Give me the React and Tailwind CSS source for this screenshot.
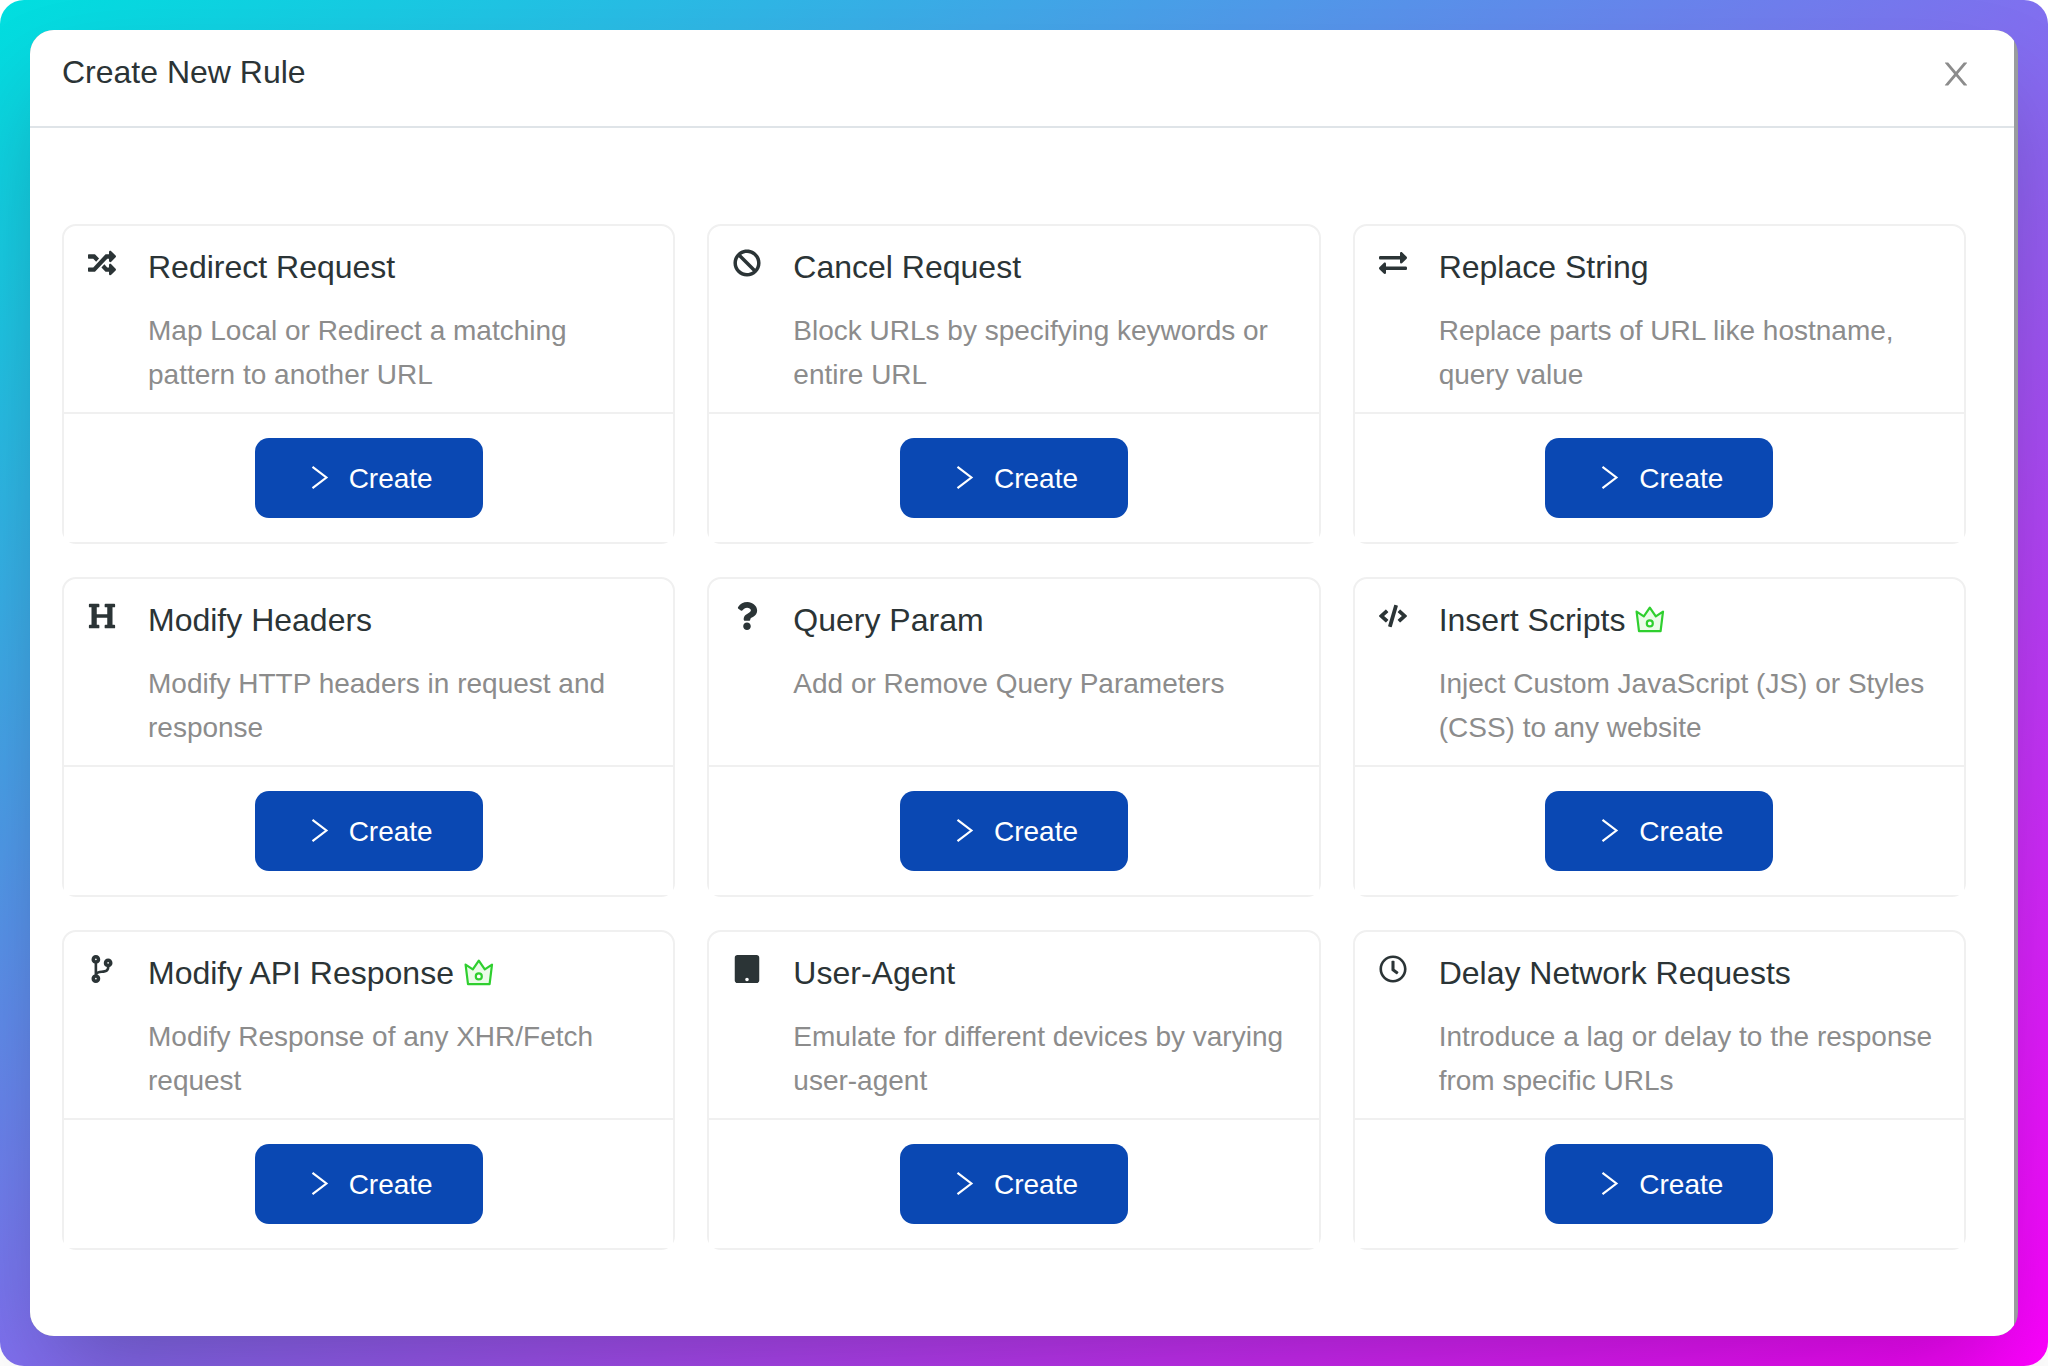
import {
  FaBan,
  FaCode,
  FaCodeBranch,
  FaExchangeAlt,
  FaHeading,
  FaQuestion,
  FaRandom,
  FaRegClock,
  FaTablet,
} from "react-icons/fa";

const rules = [
  { icon: FaRandom, title: "Redirect Request", text: "Map Local or Redirect a matching pattern to another URL" },
  { icon: FaBan, title: "Cancel Request", text: "Block URLs by specifying keywords or entire URL" },
  { icon: FaExchangeAlt, title: "Replace String", text: "Replace parts of URL like hostname, query value" },
  { icon: FaHeading, title: "Modify Headers", text: "Modify HTTP headers in request and response" },
  { icon: FaQuestion, title: "Query Param", text: "Add or Remove Query Parameters" },
  { icon: FaCode, title: "Insert Scripts", text: "Inject Custom JavaScript (JS) or Styles (CSS) to any website", premium: true },
  { icon: FaCodeBranch, title: "Modify API Response", text: "Modify Response of any XHR/Fetch request", premium: true },
  { icon: FaTablet, title: "User-Agent", text: "Emulate for different devices by varying user-agent" },
  { icon: FaRegClock, title: "Delay Network Requests", text: "Introduce a lag or delay to the response from specific URLs" },
];

function CloseIcon() {
  return (
    <svg viewBox="0 0 1024 1024" className="size-9" fill="currentColor" aria-hidden="true">
      <path d="M563.8 512l262.5-312.9c4.4-5.2.7-13.1-6.1-13.1h-79.8c-4.7 0-9.2 2.1-12.3 5.7L511.6 449.8 295.1 191.7c-3-3.6-7.5-5.7-12.3-5.7H203c-6.8 0-10.5 7.9-6.1 13.1L459.4 512 196.9 824.9A7.95 7.95 0 0 0 203 838h79.8c4.7 0 9.2-2.1 12.3-5.7l216.5-258.1 216.5 258.1c3 3.6 7.5 5.7 12.3 5.7h79.8c6.8 0 10.5-7.9 6.1-13.1L563.8 512z" />
    </svg>
  );
}

function ChevronIcon() {
  return (
    <svg viewBox="0 0 28 28" className="size-7" fill="none" aria-hidden="true">
      <path d="M7.5 1.8L21.4 12.5L7.5 23.2" stroke="currentColor" strokeWidth="2.2" />
    </svg>
  );
}

function CrownIcon() {
  return (
    <svg viewBox="0 0 32 32" className="size-8" fill="none" aria-hidden="true">
      <path
        d="M3.6 7.6L10.8 12.4L16.8 3.6L22.8 12.4L30 7.6L27.6 27.2H6Z"
        fill="#ebfbe9"
        stroke="#2fcf2f"
        strokeWidth="2.2"
        strokeLinejoin="round"
      />
      <circle cx="16.8" cy="19.4" r="3" fill="#fff" stroke="#2fcf2f" strokeWidth="2.2" />
    </svg>
  );
}

function RuleCard({ rule }) {
  const Icon = rule.icon;
  return (
    <li className="flex flex-col rounded-[14px] border-2 border-[#f0f0f0] bg-white">
      <div className="flex flex-1 gap-8 px-6 pt-4 pb-[15px]">
        <Icon className="mt-[7px] size-7 shrink-0" aria-hidden="true" />
        <div className="min-w-0 flex-1">
          <h2 className="mb-[17px] flex items-center gap-2 text-[32px] leading-[50px]">
            {rule.title}
            {rule.premium && <CrownIcon />}
          </h2>
          <p className="min-h-22 text-[28px] leading-[44px] text-[#8c8c8c]">{rule.text}</p>
        </div>
      </div>
      <div className="flex justify-center border-t-2 border-[#f0f0f0] bg-white py-6">
        <button
          type="button"
          className="flex h-20 items-center gap-4 rounded-[14px] bg-[#0a48b3] px-[50px] pt-0.5 text-[28px] leading-[44px] text-white"
        >
          <ChevronIcon />
          Create
        </button>
      </div>
    </li>
  );
}

export default function App() {
  return (
    <div className="flex min-h-screen rounded-3xl bg-linear-to-br/srgb from-[#00dfdf] to-[#ff00ff] p-[30px] font-['Liberation_Sans',Arial,sans-serif] text-[#2b3436]">
      <main className="flex flex-1 overflow-hidden rounded-3xl bg-[#999c9e] pr-1 shadow-[0_50px_100px_-20px_rgba(0,0,0,0.25)]">
        <div className="flex-1 bg-white">
          <header className="flex items-start justify-between border-b-2 border-[#dfe4e8] pt-4 pr-10 pb-6 pl-8">
            <h1 className="text-[32px] leading-[52px]">Create New Rule</h1>
            <button type="button" aria-label="Close" className="flex h-14 items-center text-[#8c8c8c]">
              <CloseIcon />
            </button>
          </header>
          <ul className="grid grid-cols-3 gap-x-8 gap-y-[33px] pt-24 pr-12 pb-16 pl-8">
            {rules.map((rule) => (
              <RuleCard key={rule.title} rule={rule} />
            ))}
          </ul>
        </div>
      </main>
    </div>
  );
}
